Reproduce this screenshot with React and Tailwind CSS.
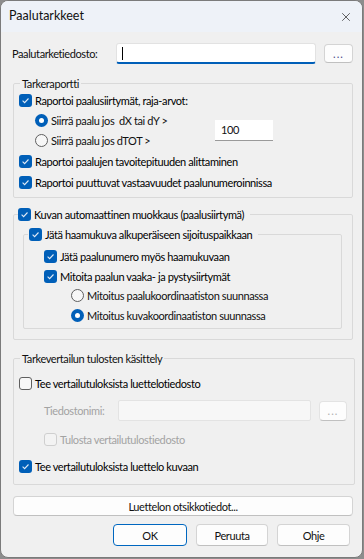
import { X } from 'lucide-react';

const Check = ({ checked, disabled }) =>
  checked ? (
    <span className="w-[13px] h-[13px] rounded-[3px] bg-[#005fb8] flex items-center justify-center shrink-0">
      <svg width="9" height="9" viewBox="0 0 9 9">
        <path d="M1.6 4.6 L3.6 6.6 L7.5 2.5" stroke="#dfeaf6" strokeWidth="1.1" fill="none" />
      </svg>
    </span>
  ) : (
    <span
      className={`w-[13px] h-[13px] rounded-[3px] border shrink-0 ${
        disabled ? 'border-[#cfcfcf] bg-[#f3f3f3]' : 'border-[#5f5f5f] bg-[#f7f7f7]'
      }`}
    />
  );

const Radio = ({ checked }) =>
  checked ? (
    <span className="w-[13px] h-[13px] rounded-full bg-[#005fb8] flex items-center justify-center shrink-0">
      <span className="w-[5px] h-[5px] rounded-full bg-white" />
    </span>
  ) : (
    <span className="w-[13px] h-[13px] rounded-full border border-[#5f5f5f] bg-[#f7f7f7] shrink-0" />
  );

const CheckRow = ({ checked, disabled, label, className = 'h-5' }) => (
  <div className={`flex items-center gap-[3px] ${className}`}>
    <Check checked={checked} disabled={disabled} />
    <span className={disabled ? 'text-[#a3a3a3]' : 'text-black'}>{label}</span>
  </div>
);

const RadioRow = ({ checked, label, className = 'h-5' }) => (
  <div className={`flex items-center gap-[3px] ${className}`}>
    <Radio checked={checked} />
    <span>{label}</span>
  </div>
);

const Btn = ({ children, className = '', primary }) => (
  <div
    className={`flex items-center justify-center rounded-[4px] bg-[#fdfdfd] border ${
      primary ? 'border-[#0067c0]' : 'border-[#d4d4d4] border-b-[#c0c0c0]'
    } ${className}`}
  >
    {children}
  </div>
);

export default function App() {
  return (
    <div className="w-[364px] h-[559px] bg-[#8d8d8d] font-['Lato',sans-serif] text-[11px] tracking-[-0.4px] text-[#111] leading-none">
      <div className="w-[363px] h-[558px] rounded-[8px] border border-[#7b7b7b] bg-[#f0f0f0] overflow-hidden flex flex-col">
        <div className="h-[31px] shrink-0 bg-[#eef2f8] flex items-center justify-between pl-[8px] pr-[9px]">
          <span className="text-[12.5px] tracking-normal">Paalutarkkeet</span>
          <X size={14} strokeWidth={1.2} className="text-[#222]" />
        </div>

        <div className="flex flex-col pl-[11px] pr-[9px]">
          <div className="flex items-center mt-[11px] h-[21px]">
            <span className="w-[104px]">Paalutarketiedosto:</span>
            <div className="w-[200px] h-[21px] bg-white border border-[#e2e2e2] border-b-2 border-b-[#005fb8] rounded-[3px] flex items-center pl-[5px]">
              <span className="w-px h-[13px] bg-black" />
            </div>
            <Btn className="ml-[8px] w-[29px] h-[19px] text-[#4a4a8a] tracking-[1px]">...</Btn>
          </div>

          <fieldset className="mt-[11px] ml-px border border-[#d9d9d9] rounded-[2px] pl-[5px] pr-[4px] pb-[4px]">
            <legend className="ml-[1px] px-[2px] h-4 flex items-center">Tarkeraportti</legend>
            <CheckRow checked label="Raportoi paalusiirtymät, raja-arvot:" className="h-5 -mt-px" />
            <div className="flex items-center">
              <div className="flex flex-col pl-[16px] w-[196px]">
                <RadioRow checked label="Siirrä paalu jos  dX tai dY >" className="h-5 whitespace-pre" />
                <RadioRow label="Siirrä paalu jos dTOT >" className="h-5" />
              </div>
              <div className="w-[58px] h-[21px] bg-white border-b border-b-[#9a9a9a] flex items-center pl-[6px]">100</div>
            </div>
            <CheckRow checked label="Raportoi paalujen tavoitepituuden alittaminen" className="h-[21px] mt-px" />
            <CheckRow checked label="Raportoi puuttuvat vastaavuudet paalunumeroinnissa" className="h-[21px]" />
          </fieldset>

          <fieldset className="mt-[6px] ml-px border border-[#d9d9d9] rounded-[2px] pl-[9px] pr-[10px] pb-[10px]">
            <legend className="ml-[-5px] pr-[6px]">
              <CheckRow checked label="Kuvan automaattinen muokkaus (paalusiirtymä)" />
            </legend>
            <fieldset className="border border-[#d9d9d9] rounded-[2px] pl-[20px] pt-[2px] pb-[3px]">
              <legend className="ml-[-16px] pl-[1px] pr-[6px]">
                <CheckRow checked label="Jätä haamukuva alkuperäiseen sijoituspaikkaan" />
              </legend>
              <CheckRow checked label="Jätä paalunumero myös haamukuvaan" />
              <CheckRow checked label="Mitoita paalun vaaka- ja pystysiirtymät" />
              <div className="pl-[27px]">
                <RadioRow label="Mitoitus paalukoordinaatiston suunnassa" className="h-[19px]" />
                <RadioRow checked label="Mitoitus kuvakoordinaatiston suunnassa" className="h-5" />
              </div>
            </fieldset>
          </fieldset>

          <fieldset className="mt-[10px] ml-px border border-[#d9d9d9] rounded-[2px] pl-[5px] pr-[7px] pt-[7px] pb-[8px]">
            <legend className="ml-[1px] px-[2px] h-4 flex items-center">Tarkevertailun tulosten käsittely</legend>
            <CheckRow label="Tee vertailutuloksista luettelotiedosto" />
            <div className="flex items-center mt-[7px] h-[21px] pl-[25px]">
              <span className="w-[74px] text-[#a3a3a3]">Tiedostonimi:</span>
              <div className="w-[193px] h-[21px] bg-[#f7f7f7] border border-[#e3e3e3] rounded-[2px]" />
              <Btn className="ml-[8px] w-[28px] h-[20px] text-[#b0b0b0] tracking-[1px] border-[#e3e3e3]">...</Btn>
            </div>
            <CheckRow disabled label="Tulosta vertailutulostiedosto" className="h-5 mt-[8px] pl-[25px]" />
            <CheckRow checked label="Tee vertailutuloksista luettelo kuvaan" className="h-5 mt-[7px]" />
          </fieldset>

          <Btn className="mt-[11px] ml-px w-[340px] h-[20px]">Luettelon otsikkotiedot...</Btn>

          <div className="flex justify-end gap-[9px] mt-[8px] mr-[3px]">
            <Btn primary className="w-[74px] h-[22px]">OK</Btn>
            <Btn className="w-[72px] h-[22px]">Peruuta</Btn>
            <Btn className="w-[73px] h-[22px]">Ohje</Btn>
          </div>
        </div>
      </div>
    </div>
  );
}
